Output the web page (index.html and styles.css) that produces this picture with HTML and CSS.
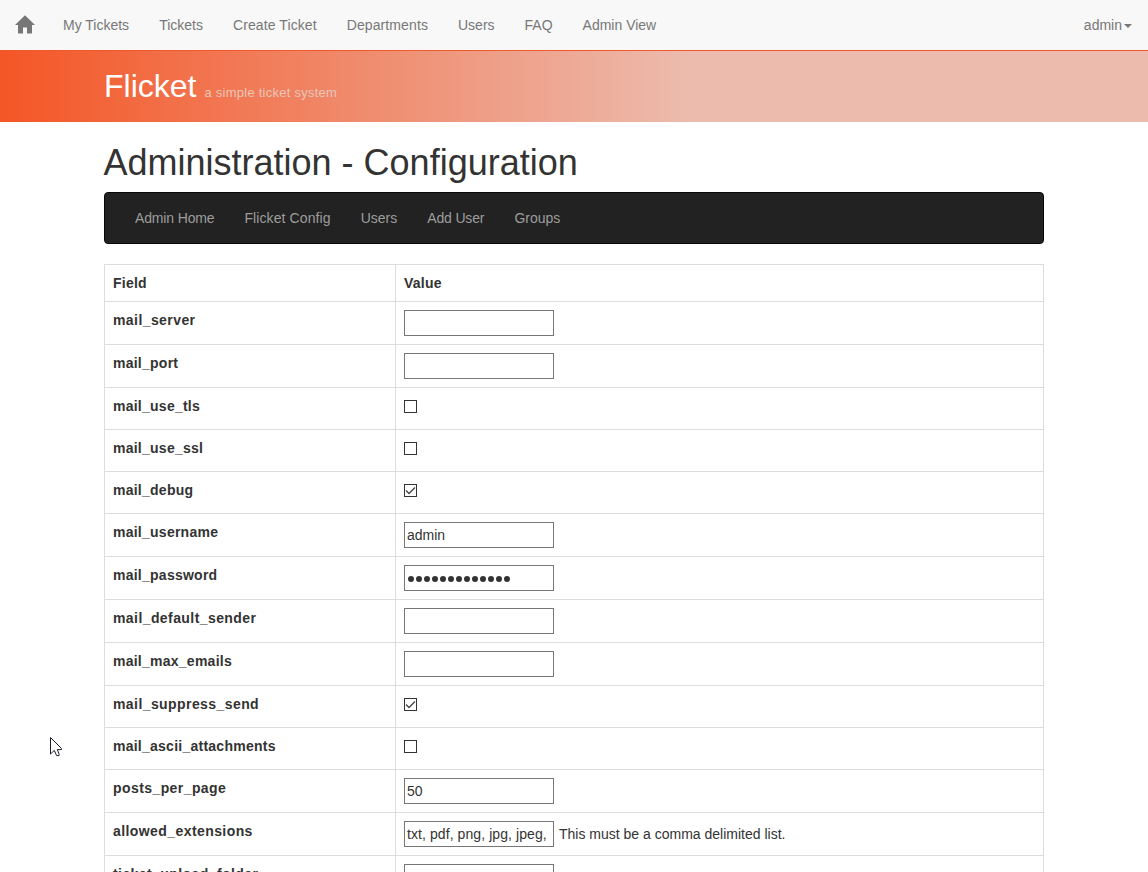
FILE: index.html
```html
<!DOCTYPE html>
<html lang="en">
<head>
<meta charset="utf-8">
<title>Flicket - Configuration</title>
<link rel="stylesheet" href="styles.css">
</head>
<body>
<nav class="topnav">
  <a class="home" href="#" aria-label="Home"><svg width="20" height="19" viewBox="0 0 20 19"><path d="M10 0.3 20 10H17V18.5H12V12.5H8V18.5H3V10H0Z" fill="#777"/></svg></a>
  <a href="#">My Tickets</a>
  <a href="#">Tickets</a>
  <a class="loose" href="#">Create Ticket</a>
  <a class="loose" href="#">Departments</a>
  <a href="#">Users</a>
  <a href="#">FAQ</a>
  <a href="#">Admin View</a>
  <a class="account" href="#">admin<span class="caret"></span></a>
</nav>
<header class="banner">
  <div class="container"><span class="brand">Flicket</span><span class="tagline">a simple ticket system</span></div>
</header>
<main class="container">
  <h1>Administration - Configuration</h1>
  <nav class="subnav">
    <a class="tight" href="#">Admin Home</a>
    <a class="loose" href="#">Flicket Config</a>
    <a href="#">Users</a>
    <a class="tight" href="#">Add User</a>
    <a href="#">Groups</a>
  </nav>
  <table class="config">
    <thead><tr><th class="field">Field</th><th>Value</th></tr></thead>
    <tbody>
      <tr><th>mail_server</th><td><input class="text" type="text"></td></tr>
      <tr><th class="narrow">mail_port</th><td><input class="text" type="text"></td></tr>
      <tr class="check-row"><th class="narrow">mail_use_tls</th><td><span class="check"></span></td></tr>
      <tr class="check-row"><th class="narrow">mail_use_ssl</th><td><span class="check"></span></td></tr>
      <tr class="check-row"><th class="narrow">mail_debug</th><td><span class="check"><svg width="11" height="11" viewBox="0 0 11 11"><path d="M1 5.5 4 8.5 10 2.5"/></svg></span></td></tr>
      <tr><th class="narrow">mail_username</th><td><input class="text" type="text" value="admin"></td></tr>
      <tr><th class="narrow">mail_password</th><td><div class="text dots"><i></i><i></i><i></i><i></i><i></i><i></i><i></i><i></i><i></i><i></i><i></i><i></i><i></i></div></td></tr>
      <tr><th>mail_default_sender</th><td><input class="text" type="text"></td></tr>
      <tr><th class="narrow">mail_max_emails</th><td><input class="text" type="text"></td></tr>
      <tr class="check-row"><th>mail_suppress_send</th><td><span class="check"><svg width="11" height="11" viewBox="0 0 11 11"><path d="M1 5.5 4 8.5 10 2.5"/></svg></span></td></tr>
      <tr class="check-row"><th class="narrow">mail_ascii_attachments</th><td><span class="check"></span></td></tr>
      <tr><th>posts_per_page</th><td><input class="text" type="text" value="50"></td></tr>
      <tr><th>allowed_extensions</th><td><div class="with-hint"><input class="text list" type="text" value="txt, pdf, png, jpg, jpeg,"><span class="hint">This must be a comma delimited list.</span></div></td></tr>
      <tr><th>ticket_upload_folder</th><td><input class="text" type="text"></td></tr>
    </tbody>
  </table>
</main>
<svg class="pointer" width="14" height="20" viewBox="0 0 14 20"><path d="M.5.5V17L4.3 13.4 6.6 18.6H9L9.2 17.4 7.3 12.6H11.5V11.5Z" fill="#fff" stroke="#1c1c28"/></svg>
</body>
</html>
```

FILE: styles.css
```css
* { box-sizing: border-box; }
html { height: 100%; overflow: hidden; }
body {
  margin: 0;
  height: 872px;
  overflow: hidden;
  background: #fff;
  color: #333;
  font: 14px/20px "Liberation Sans", Arial, sans-serif;
}
a { text-decoration: none; }
.topnav {
  display: flex;
  width: 1147px;
  height: 50px;
  background: #f8f8f8;
  box-shadow: 1px 0 #f8f8f8;
}
.topnav a { padding: 15px; color: #777; }
.topnav .home { padding: 15px 13px 0 15px; }
.home svg { display: block; }
.topnav .account { display: flex; margin-left: auto; }
.loose { letter-spacing: 0.1px; }
.tight { letter-spacing: -0.15px; }
.caret {
  margin: 9px 0 0 2px;
  width: 8px;
  height: 4px;
  border: 4px solid transparent;
  border-top-color: #777;
  border-bottom: 0;
}
.banner {
  height: 72px;
  border-top: 1px solid #ee5a2d;
  background: linear-gradient(90deg, #f45626 0%, #ecbbad 60%);
}
.container { width: 940px; margin: 0 0 0 104px; }
.banner .container { display: flex; align-items: baseline; padding-top: 15px; line-height: 40px; }
.brand { color: #fff; font-size: 32px; }
.tagline { margin-left: 8px; color: #e9c6b9; font-size: 13px; letter-spacing: 0.25px; }
h1 { margin: 0 0 0 -0.5px; padding-top: 21px; height: 70px; font-size: 36px; line-height: 40px; font-weight: 400; }
.subnav {
  display: flex;
  height: 52px;
  padding: 0 15px;
  border: 1px solid #080808;
  border-radius: 4px;
  background: #222;
}
.subnav a { padding: 15px; color: #9d9d9d; }
.config {
  width: 940px;
  margin-top: 20px;
  border-collapse: collapse;
  table-layout: fixed;
}
.config th, .config td {
  height: 43px;
  padding: 8px;
  border: 1px solid #ddd;
  text-align: left;
  vertical-align: top;
}
.config thead th { height: 37px; }
.config .check-row th, .config .check-row td { height: 42px; }
.config .field { width: 291px; }
.config th { letter-spacing: 0.42px; }
.config thead th, .config th.narrow { letter-spacing: 0.25px; }
.text {
  display: block;
  width: 150px;
  height: 26px;
  margin: 0;
  padding: 0 2px;
  border: 1px solid #777;
  border-radius: 0;
  background: #fff;
  color: #333;
  font: inherit;
}
.list { letter-spacing: 0.08px; }
.dots { display: flex; align-items: center; gap: 2px; padding: 2px 3px 0; }
.dots i { width: 6px; height: 6px; border-radius: 50%; background: #333; }
.check { display: block; width: 13px; height: 13px; margin-top: 4px; border: 1px solid #333; }
.check svg { display: block; fill: none; stroke: #444; stroke-width: 1.3; }
.with-hint { display: flex; gap: 5px; }
.hint { padding-top: 3px; white-space: nowrap; }
.pointer { position: absolute; left: 50px; top: 737px; }
```
